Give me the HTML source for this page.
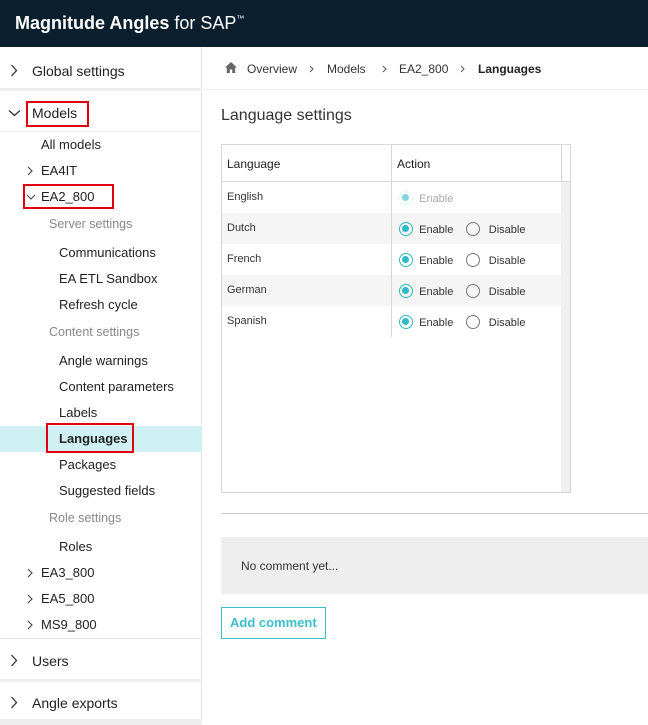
<!DOCTYPE html>
<html><head><style>
*{margin:0;padding:0;box-sizing:border-box}
body{width:648px;height:725px;overflow:hidden;background:#fff;font-family:"Liberation Sans",sans-serif;position:relative;color:#222}
.a{position:absolute;white-space:nowrap}
.hdr{left:0;top:0;width:648px;height:47px;background:#0b1f2e}
.side{left:0;top:47px;width:202px;height:678px;border-right:1px solid #e3e3e3}
.t{font-size:13px;color:#222}
.big{font-size:14px;color:#222}
.g{font-size:12.5px;color:#888}
.sep{left:0;width:202px;height:3px;background:#eee}
.red{border:2px solid #e0000f}
.rad{display:inline-block;width:14px;height:14px;border-radius:50%;border:1.5px solid #2fb9c3;vertical-align:-3px;position:relative}
.rad.on::after{content:"";position:absolute;left:2px;top:2px;width:7px;height:7px;border-radius:50%;background:#2fb9c3}
.rad.off{border-color:#777}
.cell{font-size:11px;color:#333}
svg.c{position:absolute}
</style></head><body>
<div class="a hdr"></div>
<div class="a" style="left:15px;top:13px;font-size:18px;color:#fff"><b>Magnitude Angles</b> for SAP<sup style="font-size:8px;vertical-align:8px">™</sup></div>
<div class="a side"></div>
<svg class="c" style="left:10px;top:64px" width="8" height="13"><path d="M1.5 1L6.5 6.5L1.5 12" fill="none" stroke="#333" stroke-width="1.3"/></svg>
<div class="a big" style="left:32px;top:63px">Global settings</div>
<div class="a sep" style="top:88px"></div>
<svg class="c" style="left:8px;top:109px" width="13" height="8"><path d="M1 1.5L6.5 6.5L12 1.5" fill="none" stroke="#333" stroke-width="1.3"/></svg>
<div class="a red" style="left:26px;top:101px;width:63px;height:26px"></div>
<div class="a big" style="left:32px;top:105px">Models</div>
<div class="a" style="left:0;top:131px;width:202px;height:1px;background:#eee"></div>
<div class="a t" style="left:41px;top:137px">All models</div>
<svg class="c" style="left:27px;top:166px" width="6" height="10"><path d="M1 1L5 5L1 9" fill="none" stroke="#444" stroke-width="1.1"/></svg>
<div class="a t" style="left:41px;top:163px">EA4IT</div>
<div class="a red" style="left:23px;top:184px;width:91px;height:25px"></div>
<svg class="c" style="left:26px;top:194px" width="10" height="6"><path d="M1 1L5 5L9 1" fill="none" stroke="#444" stroke-width="1.1"/></svg>
<div class="a t" style="left:41px;top:189px">EA2_800</div>
<div class="a g" style="left:49px;top:217px">Server settings</div>
<div class="a t" style="left:59px;top:245px">Communications</div>
<div class="a t" style="left:59px;top:271px">EA ETL Sandbox</div>
<div class="a t" style="left:59px;top:297px">Refresh cycle</div>
<div class="a g" style="left:49px;top:325px">Content settings</div>
<div class="a t" style="left:59px;top:353px">Angle warnings</div>
<div class="a t" style="left:59px;top:379px">Content parameters</div>
<div class="a t" style="left:59px;top:405px">Labels</div>
<div class="a" style="left:0;top:426px;width:202px;height:26px;background:#cff1f4"></div>
<div class="a red" style="left:46px;top:423px;width:88px;height:30px"></div>
<div class="a t" style="left:59px;top:431px;font-weight:bold">Languages</div>
<div class="a t" style="left:59px;top:457px">Packages</div>
<div class="a t" style="left:59px;top:483px">Suggested fields</div>
<div class="a g" style="left:49px;top:511px">Role settings</div>
<div class="a t" style="left:59px;top:539px">Roles</div>
<svg class="c" style="left:27px;top:568px" width="6" height="10"><path d="M1 1L5 5L1 9" fill="none" stroke="#444" stroke-width="1.1"/></svg>
<div class="a t" style="left:41px;top:565px">EA3_800</div>
<svg class="c" style="left:27px;top:594px" width="6" height="10"><path d="M1 1L5 5L1 9" fill="none" stroke="#444" stroke-width="1.1"/></svg>
<div class="a t" style="left:41px;top:591px">EA5_800</div>
<svg class="c" style="left:27px;top:620px" width="6" height="10"><path d="M1 1L5 5L1 9" fill="none" stroke="#444" stroke-width="1.1"/></svg>
<div class="a t" style="left:41px;top:617px">MS9_800</div>
<div class="a" style="left:0;top:638px;width:202px;height:1px;background:#e6e6e6"></div>
<svg class="c" style="left:10px;top:654px" width="8" height="13"><path d="M1.5 1L6.5 6.5L1.5 12" fill="none" stroke="#333" stroke-width="1.3"/></svg>
<div class="a big" style="left:32px;top:653px">Users</div>
<div class="a sep" style="top:679px"></div>
<svg class="c" style="left:10px;top:696px" width="8" height="13"><path d="M1.5 1L6.5 6.5L1.5 12" fill="none" stroke="#333" stroke-width="1.3"/></svg>
<div class="a big" style="left:32px;top:695px">Angle exports</div>
<div class="a sep" style="top:719px;height:6px"></div>

<svg class="a" style="left:225px;top:62px" width="12" height="11" viewBox="0 0 12 11"><path d="M6 0L0 5.5h1.8V11h3V7.5h2.4V11h3V5.5H12z" fill="#666"/></svg>
<div class="a" style="left:247px;top:62px;font-size:12px;color:#333">Overview</div>
<div class="a" style="left:327px;top:62px;font-size:12px;color:#333">Models</div>
<div class="a" style="left:399px;top:62px;font-size:12px;color:#333">EA2_800</div>
<div class="a" style="left:478px;top:62px;font-size:12px;color:#222;font-weight:bold">Languages</div>
<svg class="c" style="left:309px;top:65px" width="5" height="8"><path d="M1 1L4 4L1 7" fill="none" stroke="#555" stroke-width="1"/></svg>
<svg class="c" style="left:382px;top:65px" width="5" height="8"><path d="M1 1L4 4L1 7" fill="none" stroke="#555" stroke-width="1"/></svg>
<svg class="c" style="left:460px;top:65px" width="5" height="8"><path d="M1 1L4 4L1 7" fill="none" stroke="#555" stroke-width="1"/></svg>
<div class="a" style="left:203px;top:89px;width:445px;height:1px;background:#eee"></div>
<div class="a" style="left:221px;top:107px;font-size:16px;color:#333">Language settings</div>

<div class="a" style="left:221px;top:144px;width:350px;height:349px;border:1px solid #d6d6d6"></div>
<div class="a" style="left:561px;top:182px;width:9px;height:310px;background:#f0f0f0"></div>
<div class="a" style="left:222px;top:181px;width:348px;height:1px;background:#d6d6d6"></div>
<div class="a" style="left:391px;top:145px;width:1px;height:192px;background:#d6d6d6"></div>
<div class="a" style="left:561px;top:145px;width:1px;height:37px;background:#d6d6d6"></div>
<div class="a" style="left:227px;top:157px;font-size:12px;color:#222">Language</div>
<div class="a" style="left:397px;top:157px;font-size:12px;color:#222">Action</div>
<div class="a" style="left:222px;top:213px;width:339px;height:31px;background:#f5f5f5"></div>
<div class="a" style="left:222px;top:275px;width:339px;height:31px;background:#f5f5f5"></div>
<div class="a" style="left:391px;top:182px;width:1px;height:155px;background:#d6d6d6"></div>
<div class="a cell" style="left:227px;top:191px">English</div>
<div class="a cell" style="left:227px;top:222px">Dutch</div>
<div class="a cell" style="left:227px;top:253px">French</div>
<div class="a cell" style="left:227px;top:284px">German</div>
<div class="a cell" style="left:227px;top:315px">Spanish</div>
<div class="a cell" style="left:399px;top:191px;color:#aaa"><span class="rad on" style="border-color:#cdeff1;opacity:.6"></span>&nbsp;&nbsp;Enable</div>
<div class="a cell" style="left:399px;top:222px"><span class="rad on"></span>&nbsp;&nbsp;Enable&nbsp;&nbsp;&nbsp;&nbsp;<span class="rad off"></span>&nbsp;&nbsp;&nbsp;Disable</div>
<div class="a cell" style="left:399px;top:253px"><span class="rad on"></span>&nbsp;&nbsp;Enable&nbsp;&nbsp;&nbsp;&nbsp;<span class="rad off"></span>&nbsp;&nbsp;&nbsp;Disable</div>
<div class="a cell" style="left:399px;top:284px"><span class="rad on"></span>&nbsp;&nbsp;Enable&nbsp;&nbsp;&nbsp;&nbsp;<span class="rad off"></span>&nbsp;&nbsp;&nbsp;Disable</div>
<div class="a cell" style="left:399px;top:315px"><span class="rad on"></span>&nbsp;&nbsp;Enable&nbsp;&nbsp;&nbsp;&nbsp;<span class="rad off"></span>&nbsp;&nbsp;&nbsp;Disable</div>

<div class="a" style="left:221px;top:513px;width:427px;height:1px;background:#ccc"></div>
<div class="a" style="left:221px;top:537px;width:427px;height:57px;background:#eee"></div>
<div class="a" style="left:241px;top:559px;font-size:12px;color:#333">No comment yet...</div>
<div class="a" style="left:221px;top:607px;width:105px;height:32px;border:1px solid #3cbfc8"></div>
<div class="a" style="left:230px;top:615px;font-size:13px;font-weight:bold;color:#3cbfc8">Add comment</div>
</body></html>
